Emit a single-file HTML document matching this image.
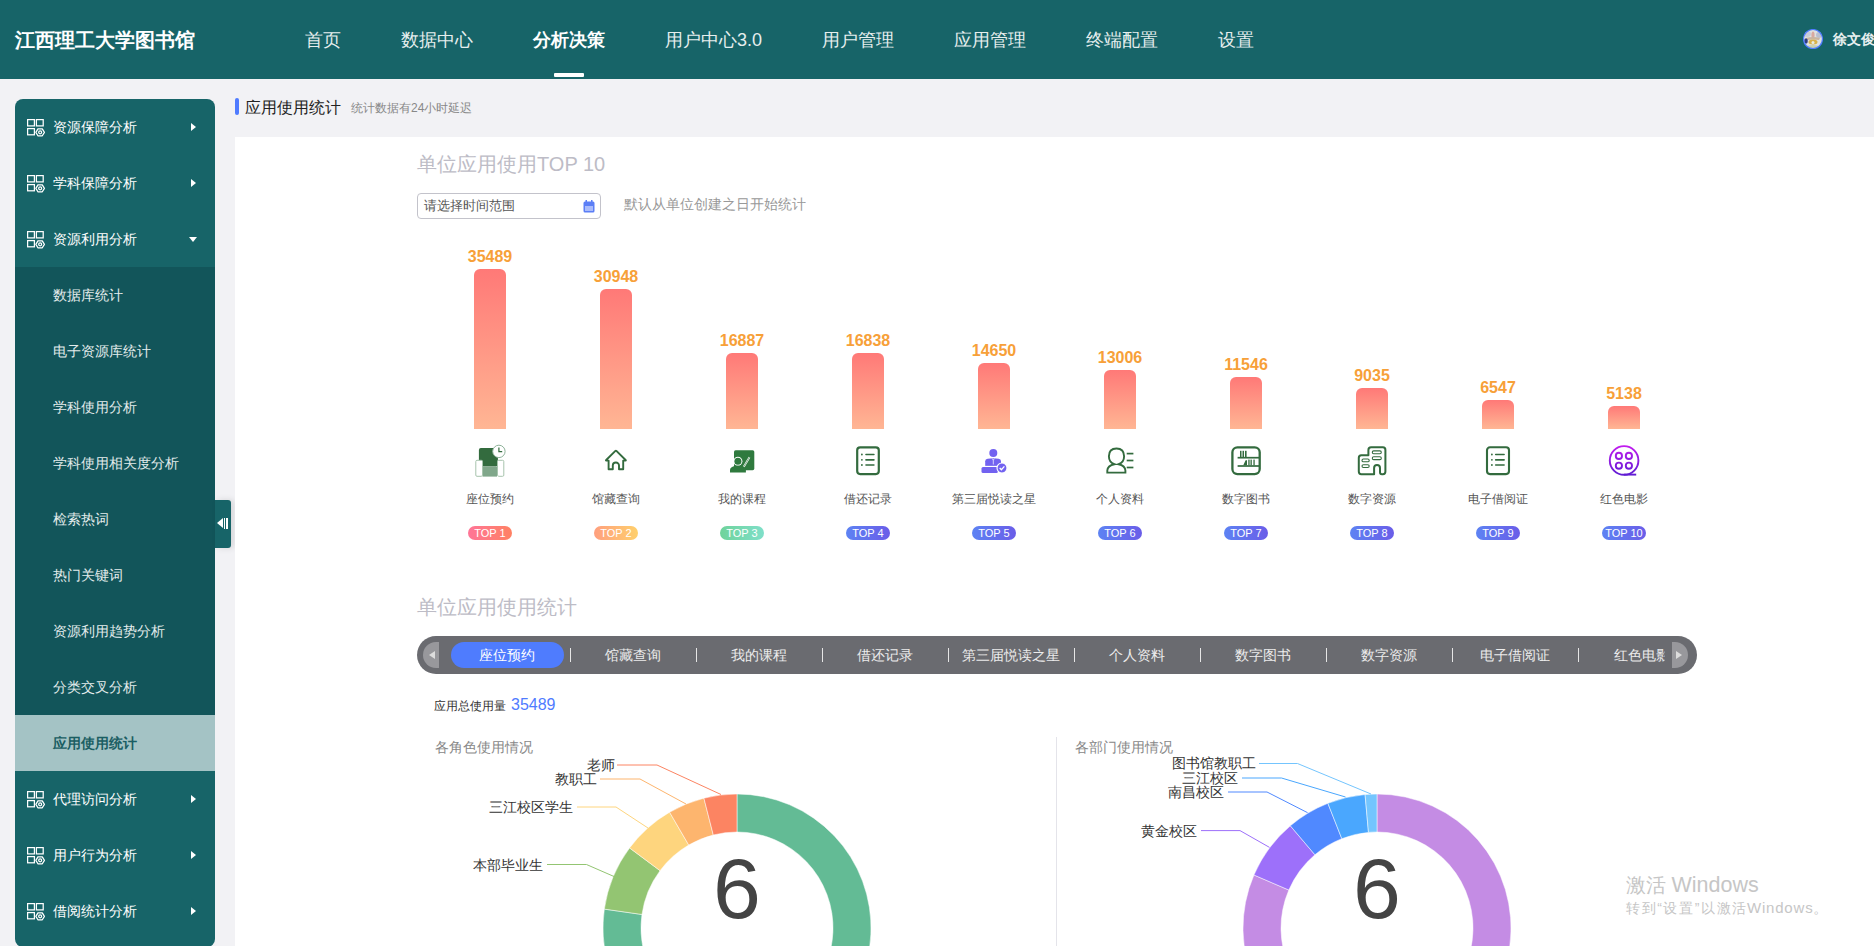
<!DOCTYPE html>
<html><head><meta charset="utf-8">
<style>
*{margin:0;padding:0;box-sizing:border-box}
html,body{width:1874px;height:946px;overflow:hidden;background:#f2f2f5;font-family:"Liberation Sans",sans-serif;position:relative}
.a{position:absolute;white-space:nowrap}
#hdr{position:absolute;left:0;top:0;width:1874px;height:79px;background:#176468}
.logo{left:15px;top:26px;font-size:20px;line-height:28px;font-weight:bold;color:#fff}
.nav{top:27px;font-size:18px;line-height:26px;color:#e6eeee}
.nav.on{font-weight:bold;color:#fff}
.uline{left:554px;top:73px;width:30px;height:4px;background:#fff;border-radius:1px}
#side{position:absolute;left:15px;top:99px;width:200px;height:848px;background:#176468;border-radius:8px;overflow:hidden}
.it{position:absolute;left:0;width:200px;height:56px}
.it .t{position:absolute;left:38px;top:19px;font-size:14px;line-height:18px;color:#fff;white-space:nowrap}
.sub{position:absolute;left:0;top:168px;width:200px;height:504px;background:#12555a}
.sub .it .t{color:#e3ecec}
.sub .it.on{background:#a4c3c5}
.sub .it.on .t{color:#1b5e63;font-weight:bold}
.ico{position:absolute;left:12px;top:20px;width:19px;height:19px}
.arr{position:absolute;left:176px;top:23.5px;width:0;height:0;border-top:4.5px solid transparent;border-bottom:4.5px solid transparent;border-left:5.5px solid #fff}
.arrd{position:absolute;left:174px;top:26px;width:0;height:0;border-left:4px solid transparent;border-right:4px solid transparent;border-top:5px solid #fff}
#tog{position:absolute;left:215px;top:500px;width:16px;height:48px;background:#176468;border-radius:0 3px 3px 0;box-shadow:3px 0 6px rgba(0,0,0,.12)}
.ptitle{left:245px;top:97px;font-size:16px;line-height:22px;color:#222}
.pbar{position:absolute;left:235px;top:98px;width:4px;height:17px;background:#4f7bff;border-radius:2px}
.psub{left:351px;top:100px;font-size:12px;line-height:16px;color:#888}
#panel{position:absolute;left:235px;top:137px;width:1639px;height:809px;background:#fff}
/*CSS2*/
.h2{left:417px;font-size:20px;line-height:26px;color:#bdbcc6}
.inp{position:absolute;left:417px;top:193px;width:184px;height:26px;border:1px solid #c3c3cb;border-radius:4px;background:#fff}
.inp .t{position:absolute;left:6px;top:3px;font-size:13px;line-height:17px;color:#555}
.note{left:624px;top:195px;font-size:14px;line-height:18px;color:#999}
.val{font-size:16px;line-height:18px;font-weight:bold;color:#f7a038;text-align:center;width:80px}
.bar{position:absolute;width:32px;border-radius:6px 6px 0 0;background:linear-gradient(#ff7977,#ffb694)}
.lab{font-size:12px;line-height:16px;color:#555;text-align:center;width:120px}
.bdg{position:absolute;width:44px;height:14px;border-radius:7px;color:#fff;font-size:11px;line-height:14px;text-align:center}
.aicon{position:absolute;width:34px;height:34px}
.tabs{position:absolute;left:417px;top:636px;width:1280px;height:38px;border-radius:19px;background:#6a6b70;overflow:hidden}
.tab{position:absolute;top:6px;height:26px;width:113px;font-size:14px;line-height:26px;color:#ececec;text-align:center}
.tab.on{background:#4f7cfe;border-radius:13px;color:#fff}
.sep{position:absolute;top:12px;width:1px;height:14px;background:#e6e6e6}
.tarL{position:absolute;left:6px;top:6px;width:16px;height:26px;background:#98989c;border-radius:13px 0 0 13px}
.tarR{position:absolute;left:1255px;top:6px;width:16px;height:26px;background:#98989c;border-radius:0 13px 13px 0}
.tot{left:434px;top:698px;font-size:12px;line-height:16px;color:#333}
.totn{left:511px;top:695px;font-size:16px;line-height:20px;color:#4f7bff}
.ctitle{font-size:14px;line-height:18px;color:#888}
.plab{font-size:14px;line-height:16px;color:#333}
.big6{font-size:86px;line-height:90px;color:#444;text-align:center;width:100px}
.wm1{left:1626px;top:873px;font-size:20px;line-height:24px;color:#c6c6c6}
.wm2{left:1626px;top:899px;font-size:14px;line-height:18px;color:#c6c6c6}
/*ENDCSS2*/
</style></head><body>
<div id="hdr">
  <div class="a logo">江西理工大学图书馆</div>
  <div class="a nav" style="left:305px">首页</div>
  <div class="a nav" style="left:401px">数据中心</div>
  <div class="a nav on" style="left:533px">分析决策</div>
  <div class="a nav" style="left:665px">用户中心3.0</div>
  <div class="a nav" style="left:822px">用户管理</div>
  <div class="a nav" style="left:954px">应用管理</div>
  <div class="a nav" style="left:1086px">终端配置</div>
  <div class="a nav" style="left:1218px">设置</div>
  <div class="a uline"></div>
  <svg style="position:absolute;left:1803px;top:29px" width="20" height="20" viewBox="0 0 20 20"><defs><clipPath id="avc"><circle cx="10" cy="10" r="9.5"/></clipPath></defs><g clip-path="url(#avc)"><rect width="20" height="20" fill="#dfe2e0"/><ellipse cx="4" cy="5" rx="4" ry="3" fill="#c9ccd8"/><ellipse cx="16" cy="6" rx="3" ry="3" fill="#b9bfd0"/><ellipse cx="10" cy="6" rx="1.6" ry="3.5" fill="#d8a9a0"/><path d="M3 9Q10 7 17 9L16 11Q10 10 4 11Z" fill="#c9b5a0"/><ellipse cx="10" cy="13" rx="4.5" ry="2.5" fill="#d9b24a"/><ellipse cx="10" cy="13.5" rx="1.5" ry="1.5" fill="#e9eee0"/><ellipse cx="3" cy="12" rx="1.8" ry="2.8" fill="#2f3c80"/><ellipse cx="10" cy="18" rx="6" ry="2" fill="#c9d0b0"/></g><circle cx="10" cy="10" r="9.5" fill="none" stroke="#4f7cff" stroke-width="1.2"/></svg>
  <div class="a" style="left:1833px;top:30px;font-size:14px;line-height:18px;font-weight:bold;color:#e8f0f0">徐文俊</div>
</div>
<div id="side">
<div class="it" style="top:0px"><svg class="ico" viewBox="0 0 19 19" width="19" height="19"><g fill="none" stroke="#fff" stroke-width="1.25"><rect x="0.6" y="0.6" width="6.8" height="6.3"/><rect x="9.4" y="0.6" width="6.8" height="6.3"/><rect x="0.6" y="9.6" width="6.8" height="6.2"/><path d="M8.9 13.35 10.9 9.9H15.3L17.4 13.35 15.3 16.8H10.9Z" stroke-linejoin="round"/><circle cx="13.15" cy="13.35" r="1.5"/></g></svg><div class="t">资源保障分析</div><div class="arr"></div></div>
<div class="it" style="top:56px"><svg class="ico" viewBox="0 0 19 19" width="19" height="19"><g fill="none" stroke="#fff" stroke-width="1.25"><rect x="0.6" y="0.6" width="6.8" height="6.3"/><rect x="9.4" y="0.6" width="6.8" height="6.3"/><rect x="0.6" y="9.6" width="6.8" height="6.2"/><path d="M8.9 13.35 10.9 9.9H15.3L17.4 13.35 15.3 16.8H10.9Z" stroke-linejoin="round"/><circle cx="13.15" cy="13.35" r="1.5"/></g></svg><div class="t">学科保障分析</div><div class="arr"></div></div>
<div class="it" style="top:112px"><svg class="ico" viewBox="0 0 19 19" width="19" height="19"><g fill="none" stroke="#fff" stroke-width="1.25"><rect x="0.6" y="0.6" width="6.8" height="6.3"/><rect x="9.4" y="0.6" width="6.8" height="6.3"/><rect x="0.6" y="9.6" width="6.8" height="6.2"/><path d="M8.9 13.35 10.9 9.9H15.3L17.4 13.35 15.3 16.8H10.9Z" stroke-linejoin="round"/><circle cx="13.15" cy="13.35" r="1.5"/></g></svg><div class="t">资源利用分析</div><div class="arrd"></div></div>
<div class="sub">
<div class="it" style="top:0px"><div class="t">数据库统计</div></div>
<div class="it" style="top:56px"><div class="t">电子资源库统计</div></div>
<div class="it" style="top:112px"><div class="t">学科使用分析</div></div>
<div class="it" style="top:168px"><div class="t">学科使用相关度分析</div></div>
<div class="it" style="top:224px"><div class="t">检索热词</div></div>
<div class="it" style="top:280px"><div class="t">热门关键词</div></div>
<div class="it" style="top:336px"><div class="t">资源利用趋势分析</div></div>
<div class="it" style="top:392px"><div class="t">分类交叉分析</div></div>
<div class="it on" style="top:448px"><div class="t">应用使用统计</div></div>
</div>
<div class="it" style="top:672px"><svg class="ico" viewBox="0 0 19 19" width="19" height="19"><g fill="none" stroke="#fff" stroke-width="1.25"><rect x="0.6" y="0.6" width="6.8" height="6.3"/><rect x="9.4" y="0.6" width="6.8" height="6.3"/><rect x="0.6" y="9.6" width="6.8" height="6.2"/><path d="M8.9 13.35 10.9 9.9H15.3L17.4 13.35 15.3 16.8H10.9Z" stroke-linejoin="round"/><circle cx="13.15" cy="13.35" r="1.5"/></g></svg><div class="t">代理访问分析</div><div class="arr"></div></div>
<div class="it" style="top:728px"><svg class="ico" viewBox="0 0 19 19" width="19" height="19"><g fill="none" stroke="#fff" stroke-width="1.25"><rect x="0.6" y="0.6" width="6.8" height="6.3"/><rect x="9.4" y="0.6" width="6.8" height="6.3"/><rect x="0.6" y="9.6" width="6.8" height="6.2"/><path d="M8.9 13.35 10.9 9.9H15.3L17.4 13.35 15.3 16.8H10.9Z" stroke-linejoin="round"/><circle cx="13.15" cy="13.35" r="1.5"/></g></svg><div class="t">用户行为分析</div><div class="arr"></div></div>
<div class="it" style="top:784px"><svg class="ico" viewBox="0 0 19 19" width="19" height="19"><g fill="none" stroke="#fff" stroke-width="1.25"><rect x="0.6" y="0.6" width="6.8" height="6.3"/><rect x="9.4" y="0.6" width="6.8" height="6.3"/><rect x="0.6" y="9.6" width="6.8" height="6.2"/><path d="M8.9 13.35 10.9 9.9H15.3L17.4 13.35 15.3 16.8H10.9Z" stroke-linejoin="round"/><circle cx="13.15" cy="13.35" r="1.5"/></g></svg><div class="t">借阅统计分析</div><div class="arr"></div></div>
</div>
<div id="tog"><div style="position:absolute;left:2px;top:18px;border-top:5px solid transparent;border-bottom:5px solid transparent;border-right:6px solid #fff"></div><div style="position:absolute;left:9px;top:18px;width:1.3px;height:11px;background:#fff"></div><div style="position:absolute;left:11.3px;top:18px;width:1.3px;height:11px;background:#fff"></div></div>
<div class="pbar"></div>
<div class="a ptitle">应用使用统计</div>
<div class="a psub">统计数据有24小时延迟</div>
<div id="panel"></div>
<!--CONTENT-->
<div class="a h2" style="top:151px">单位应用使用TOP 10</div>
<div class="inp"><div class="t">请选择时间范围</div><svg style="position:absolute;left:165px;top:6px" width="12" height="13" viewBox="0 0 12 13"><rect x="0.5" y="1.5" width="11" height="11" rx="1.5" fill="#5b7ef6"/><rect x="2" y="6" width="8" height="5" fill="#a9bbfb"/><rect x="2.5" y="0" width="1.5" height="3" fill="#5b7ef6"/><rect x="8" y="0" width="1.5" height="3" fill="#5b7ef6"/></svg></div>
<div class="a note">默认从单位创建之日开始统计</div>
<div class="bar" style="left:474px;top:268.9px;height:160.1px"></div>
<div class="a val" style="left:450px;top:247.9px">35489</div>
<svg class="aicon" style="left:473px;top:443px" viewBox="0 0 34 34"><rect x="5.9" y="5" width="19" height="18.6" rx="2" fill="#336b3e"/><rect x="9.5" y="23.6" width="14.5" height="10" fill="#80a78a"/><rect x="2.8" y="17.3" width="6.7" height="16" rx="1.2" fill="#fff" stroke="#a7c4ad" stroke-width="1"/><rect x="24.5" y="17.3" width="6.3" height="16" rx="1.2" fill="#fff" stroke="#a7c4ad" stroke-width="1"/><circle cx="25.9" cy="8.4" r="6.2" fill="#fff" stroke="#8fb39a" stroke-width="1"/><path d="M25.9 4.6V8.6H29.2" fill="none" stroke="#336b3e" stroke-width="1.2"/></svg>
<div class="a lab" style="left:430px;top:491px">座位预约</div>
<div class="bdg" style="left:468px;top:526px;background:linear-gradient(90deg,#ff7597,#ff8163)">TOP 1</div>
<div class="bar" style="left:600px;top:289.4px;height:139.6px"></div>
<div class="a val" style="left:576px;top:268.4px">30948</div>
<svg class="aicon" style="left:599px;top:443px" viewBox="0 0 34 34"><path d="M9.6 26.3V17.6H7.3Q6.6 17.6 7.2 17L16.4 7.9Q16.9 7.4 17.4 7.9L26.6 17Q27.2 17.6 26.5 17.6H24.2V26.3H20V22.6A3.1 3.1 0 0 0 13.8 22.6V26.3Z" fill="none" stroke="#336b3e" stroke-width="1.9" stroke-linejoin="round"/></svg>
<div class="a lab" style="left:556px;top:491px">馆藏查询</div>
<div class="bdg" style="left:594px;top:526px;background:linear-gradient(90deg,#ff9f7e,#ffd06c)">TOP 2</div>
<div class="bar" style="left:726px;top:352.8px;height:76.2px"></div>
<div class="a val" style="left:702px;top:331.8px">16887</div>
<svg class="aicon" style="left:725px;top:443px" viewBox="0 0 34 34"><rect x="9" y="7.3" width="20.3" height="19.9" rx="1.6" fill="#2f7a3e"/><circle cx="12.9" cy="18.3" r="4.5" fill="#fff"/><circle cx="12.9" cy="18.3" r="3.5" fill="#2f7a3e"/><path d="M5 29.5V27Q5 23 12.9 22.8 18.5 22.8 20.9 25V29.5Z" fill="#2f7a3e" stroke="#fff" stroke-width="0"/><path d="M18.8 23.8 24.5 14.2" stroke="#fff" stroke-width="1.8"/><path d="M18.8 23.8 24.5 14.2" stroke="#2f7a3e" stroke-width="0.6"/></svg>
<div class="a lab" style="left:682px;top:491px">我的课程</div>
<div class="bdg" style="left:720px;top:526px;background:linear-gradient(90deg,#6fd39b,#7fdfc9)">TOP 3</div>
<div class="bar" style="left:852px;top:353.1px;height:75.9px"></div>
<div class="a val" style="left:828px;top:332.1px">16838</div>
<svg class="aicon" style="left:851px;top:443px" viewBox="0 0 34 34"><rect x="6.2" y="4.3" width="21.6" height="26.8" rx="3" fill="none" stroke="#336b3e" stroke-width="2.2"/><g fill="#336b3e"><circle cx="10.9" cy="11.5" r="0.9"/><circle cx="10.9" cy="16.8" r="0.9"/><circle cx="10.9" cy="22" r="0.9"/><rect x="14.2" y="10.7" width="9.5" height="1.6" rx=".8"/><rect x="14.2" y="16" width="9.5" height="1.7" rx=".8"/><rect x="14.2" y="21.2" width="9.5" height="1.6" rx=".8"/></g></svg>
<div class="a lab" style="left:808px;top:491px">借还记录</div>
<div class="bdg" style="left:846px;top:526px;background:linear-gradient(90deg,#5d83f3,#6a5de8)">TOP 4</div>
<div class="bar" style="left:978px;top:362.9px;height:66.1px"></div>
<div class="a val" style="left:954px;top:341.9px">14650</div>
<svg class="aicon" style="left:977px;top:443px" viewBox="0 0 34 34"><g fill="#7262f0"><circle cx="16.3" cy="10" r="4"/><path d="M8.2 23V18.2Q8.2 15.9 10.6 15.7L16.3 15.3 21.6 15.7Q24 15.9 24 18.2V23Z"/><rect x="4.5" y="24" width="16.4" height="6" rx="1.5"/></g><path d="M15.3 15.6 16.3 17.3 17.3 15.6M16.3 17.3V21.5" fill="none" stroke="#fff" stroke-width=".7"/><path d="M4.5 23.4H21" stroke="#fff" stroke-width="1.1"/><circle cx="25" cy="25" r="5" fill="#7262f0" stroke="#fff" stroke-width="1.1"/><path d="M22.7 25 24.4 26.7 27.4 23.4" fill="none" stroke="#fff" stroke-width="1.3"/></svg>
<div class="a lab" style="left:934px;top:491px">第三届悦读之星</div>
<div class="bdg" style="left:972px;top:526px;background:linear-gradient(90deg,#5d83f3,#6a5de8)">TOP 5</div>
<div class="bar" style="left:1104px;top:370.3px;height:58.7px"></div>
<div class="a val" style="left:1080px;top:349.3px">13006</div>
<svg class="aicon" style="left:1103px;top:443px" viewBox="0 0 34 34"><path d="M11.4 21.2Q5.9 19.4 5.9 13.3 5.9 5.5 13.5 5.5 21.1 5.5 21.1 13.3 21.1 19.4 15.6 21.2 22.1 22.6 22.4 27.5V29.6H4.3V27.5Q4.6 22.6 11.4 21.2Z" fill="none" stroke="#336b3e" stroke-width="1.9" stroke-linejoin="miter"/><g stroke="#336b3e" stroke-width="1.7"><path d="M23.7 10.6H30.4"/><path d="M23.7 17.5H30.4"/><path d="M23.7 24.5H30.4"/></g></svg>
<div class="a lab" style="left:1060px;top:491px">个人资料</div>
<div class="bdg" style="left:1098px;top:526px;background:linear-gradient(90deg,#5d83f3,#6a5de8)">TOP 6</div>
<div class="bar" style="left:1230px;top:376.9px;height:52.1px"></div>
<div class="a val" style="left:1206px;top:355.9px">11546</div>
<svg class="aicon" style="left:1229px;top:443px" viewBox="0 0 34 34"><rect x="3.4" y="4.3" width="27.3" height="26.8" rx="5" fill="none" stroke="#336b3e" stroke-width="2.3"/><g stroke="#336b3e" stroke-width="1.7"><path d="M8.6 14.7H30"/><path d="M8.6 23H30"/></g><g fill="#336b3e"><rect x="11" y="7.8" width="1.5" height="6.5"/><rect x="13.5" y="7.8" width="1.5" height="6.5"/><rect x="16" y="7.8" width="1.6" height="6.5"/><path d="M14.3 22.3 16.6 17.2H18V22.3Z"/><rect x="19.3" y="16.6" width="1.3" height="5.7"/><rect x="21.5" y="16.6" width="1.3" height="5.7"/><rect x="24.4" y="16.6" width="1.3" height="5.7"/></g></svg>
<div class="a lab" style="left:1186px;top:491px">数字图书</div>
<div class="bdg" style="left:1224px;top:526px;background:linear-gradient(90deg,#5d83f3,#6a5de8)">TOP 7</div>
<div class="bar" style="left:1356px;top:388.3px;height:40.7px"></div>
<div class="a val" style="left:1332px;top:367.3px">9035</div>
<svg class="aicon" style="left:1355px;top:443px" viewBox="0 0 34 34"><path d="M3.8 14.8Q3.8 12.3 6.3 12.3H13.4V6.9Q13.4 4.2 16.1 4.2H27.9Q30.4 4.2 30.4 6.9V28.6Q30.4 31.2 27.9 31.2H26.9Q25 31.2 25 29.2V25Q25 21.9 22 21.9 19.1 21.9 19.1 25V31.2H6.3Q3.8 31.2 3.8 28.6Z" fill="none" stroke="#336b3e" stroke-width="2" stroke-linejoin="round"/><g fill="none" stroke="#336b3e" stroke-width="1.1"><rect x="17.3" y="7.9" width="9" height="2.8" rx="1.4"/><rect x="17.3" y="13.8" width="9" height="2.8" rx="1.4"/><rect x="7" y="16" width="7.2" height="2.8" rx="1.4"/><rect x="7" y="21.7" width="7.2" height="2.8" rx="1.4"/></g></svg>
<div class="a lab" style="left:1312px;top:491px">数字资源</div>
<div class="bdg" style="left:1350px;top:526px;background:linear-gradient(90deg,#5d83f3,#6a5de8)">TOP 8</div>
<div class="bar" style="left:1482px;top:399.5px;height:29.5px"></div>
<div class="a val" style="left:1458px;top:378.5px">6547</div>
<svg class="aicon" style="left:1481px;top:443px" viewBox="0 0 34 34"><rect x="6" y="4.3" width="22" height="26.8" rx="3" fill="none" stroke="#336b3e" stroke-width="2.1"/><g fill="#336b3e"><circle cx="10.9" cy="11.5" r="0.9"/><circle cx="10.9" cy="16.8" r="0.9"/><circle cx="10.9" cy="22" r="0.9"/><rect x="13.9" y="10.7" width="10" height="1.6" rx=".8"/><rect x="13.9" y="16" width="10" height="1.7" rx=".8"/><rect x="13.9" y="21.2" width="10" height="1.6" rx=".8"/></g></svg>
<div class="a lab" style="left:1438px;top:491px">电子借阅证</div>
<div class="bdg" style="left:1476px;top:526px;background:linear-gradient(90deg,#5d83f3,#6a5de8)">TOP 9</div>
<div class="bar" style="left:1608px;top:405.8px;height:23.2px"></div>
<div class="a val" style="left:1584px;top:384.8px">5138</div>
<svg class="aicon" style="left:1607px;top:443px" viewBox="0 0 34 34"><defs><linearGradient id="fg" gradientUnits="userSpaceOnUse" x1="0" y1="2" x2="0" y2="33"><stop offset="0" stop-color="#c51cf0"/><stop offset="1" stop-color="#5c1cd2"/></linearGradient></defs><g fill="none" stroke="url(#fg)" stroke-width="1.9"><circle cx="17.1" cy="17.45" r="14.3"/><circle cx="11.9" cy="12.9" r="3.1"/><circle cx="21.9" cy="12.9" r="3.1"/><circle cx="11.9" cy="22.7" r="3.1"/><circle cx="21.9" cy="22.7" r="3.1"/><path d="M17.1 31.6H29.2"/></g></svg>
<div class="a lab" style="left:1564px;top:491px">红色电影</div>
<div class="bdg" style="left:1602px;top:526px;background:linear-gradient(90deg,#5d83f3,#6a5de8)">TOP 10</div>
<div class="a h2" style="top:594px">单位应用使用统计</div>
<div class="tabs"><div class="tarL"><div style="position:absolute;left:6px;top:9px;border-top:4px solid transparent;border-bottom:4px solid transparent;border-right:6px solid #ddd"></div></div><div class="tab on" style="left:33.5px">座位预约</div><div class="sep" style="left:153px"></div><div class="tab" style="left:159.5px">馆藏查询</div><div class="sep" style="left:279px"></div><div class="tab" style="left:285.5px">我的课程</div><div class="sep" style="left:405px"></div><div class="tab" style="left:411.5px">借还记录</div><div class="sep" style="left:531px"></div><div class="tab" style="left:537.5px">第三届悦读之星</div><div class="sep" style="left:657px"></div><div class="tab" style="left:663.5px">个人资料</div><div class="sep" style="left:783px"></div><div class="tab" style="left:789.5px">数字图书</div><div class="sep" style="left:909px"></div><div class="tab" style="left:915.5px">数字资源</div><div class="sep" style="left:1035px"></div><div class="tab" style="left:1041.5px">电子借阅证</div><div class="sep" style="left:1161px"></div><div class="tab" style="left:1167.5px;clip-path:inset(0 33px 0 0);padding-left:2px">红色电影</div><div class="tarR"><div style="position:absolute;left:4px;top:9px;border-top:4px solid transparent;border-bottom:4px solid transparent;border-left:6px solid #ddd"></div></div></div>
<div class="a tot">应用总使用量</div><div class="a totn">35489</div>
<div class="a ctitle" style="left:435px;top:738px">各角色使用情况</div>
<div class="a ctitle" style="left:1075px;top:738px">各部门使用情况</div>
<div style="position:absolute;left:1056px;top:737px;width:1px;height:209px;background:#e4e4ea"></div>
<svg style="position:absolute;left:235px;top:700px" width="1639" height="246" viewBox="235 700 1639 246"><path d="M737.00 794.00A134 134 0 1 1 604.34 909.12L641.96 914.47A96 96 0 1 0 737.00 832.00Z" fill="#63bb95" stroke="#fff" stroke-width="0.5"/><path d="M604.34 909.12A134 134 0 0 1 629.56 847.92L660.03 870.63A96 96 0 0 0 641.96 914.47Z" fill="#93c572" stroke="#fff" stroke-width="0.5"/><path d="M629.56 847.92A134 134 0 0 1 669.60 812.19L688.71 845.03A96 96 0 0 0 660.03 870.63Z" fill="#fed57e" stroke="#fff" stroke-width="0.5"/><path d="M669.60 812.19A134 134 0 0 1 703.90 798.15L713.29 834.97A96 96 0 0 0 688.71 845.03Z" fill="#fdb56e" stroke="#fff" stroke-width="0.5"/><path d="M703.90 798.15A134 134 0 0 1 737.00 794.00L737.00 832.00A96 96 0 0 0 713.29 834.97Z" fill="#fc8462" stroke="#fff" stroke-width="0.5"/><path d="M1377.00 794.00A134 134 0 1 1 1253.93 875.00L1288.83 890.03A96 96 0 1 0 1377.00 832.00Z" fill="#c48ce4" stroke="#fff" stroke-width="0.5"/><path d="M1253.93 875.00A134 134 0 0 1 1290.33 825.80L1314.91 854.78A96 96 0 0 0 1288.83 890.03Z" fill="#9d70fa" stroke="#fff" stroke-width="0.5"/><path d="M1290.33 825.80A134 134 0 0 1 1327.89 803.32L1341.82 838.68A96 96 0 0 0 1314.91 854.78Z" fill="#5089ff" stroke="#fff" stroke-width="0.5"/><path d="M1327.89 803.32A134 134 0 0 1 1365.09 794.53L1368.47 832.38A96 96 0 0 0 1341.82 838.68Z" fill="#4aa7fe" stroke="#fff" stroke-width="0.5"/><path d="M1365.09 794.53A134 134 0 0 1 1377.00 794.00L1377.00 832.00A96 96 0 0 0 1368.47 832.38Z" fill="#74c5fe" stroke="#fff" stroke-width="0.5"/><polyline points="617,765 657,765 721,794.5" fill="none" stroke="#fc8462" stroke-width="1"/><polyline points="600,779 640,779 686,804" fill="none" stroke="#fdb56e" stroke-width="1"/><polyline points="577,807 616,807 648,828" fill="none" stroke="#fed57e" stroke-width="1"/><polyline points="547,864.5 586.5,864.5 614,876.5" fill="none" stroke="#93c572" stroke-width="1"/><polyline points="1259,763.5 1297.5,763.5 1371,794" fill="none" stroke="#74c5fe" stroke-width="1"/><polyline points="1242,778 1281.5,778 1345.5,797" fill="none" stroke="#4aa7fe" stroke-width="1"/><polyline points="1228,792 1267,792 1307.6,812.7" fill="none" stroke="#5089ff" stroke-width="1"/><polyline points="1201,830.6 1240,830.6 1269.5,847.4" fill="none" stroke="#9d70fa" stroke-width="1"/></svg>
<div class="a plab" style="left:414.7px;top:756.6px;width:200px;text-align:right">老师</div>
<div class="a plab" style="left:396.7px;top:770.7px;width:200px;text-align:right">教职工</div>
<div class="a plab" style="left:373.0px;top:798.8px;width:200px;text-align:right">三江校区学生</div>
<div class="a plab" style="left:343.0px;top:856.5px;width:200px;text-align:right">本部毕业生</div>
<div class="a plab" style="left:1055.6px;top:755.4px;width:200px;text-align:right">图书馆教职工</div>
<div class="a plab" style="left:1038.0px;top:770.0px;width:200px;text-align:right">三江校区</div>
<div class="a plab" style="left:1024.0px;top:784.2px;width:200px;text-align:right">南昌校区</div>
<div class="a plab" style="left:997.4px;top:822.6px;width:200px;text-align:right">黄金校区</div>
<div class="a big6" style="left:687px;top:843px">6</div>
<div class="a big6" style="left:1327px;top:843px">6</div>
<div class="a wm1">激活</div><div class="a wm1" style="left:1671.5px;font-size:21.5px">Windows</div><div class="a wm2" style="letter-spacing:1.6px">转到“设置”以激活</div><div class="a wm2" style="left:1747px;font-size:15px;letter-spacing:0.8px">Windows。</div>
<!--/CONTENT-->
</body></html>
